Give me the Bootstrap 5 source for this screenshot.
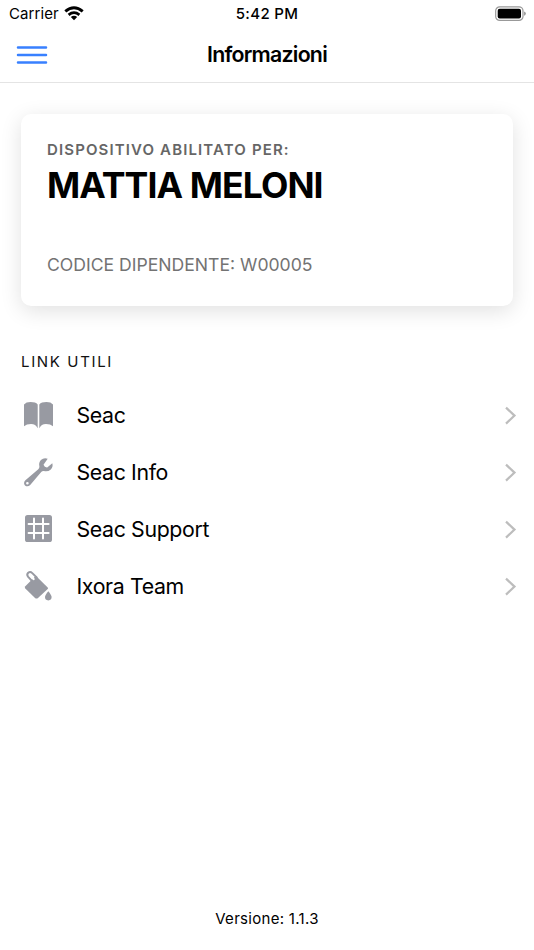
<!DOCTYPE html>
<html lang="it">
<head>
<meta charset="utf-8">
<meta name="viewport" content="width=device-width, initial-scale=1">
<title>Informazioni</title>
<link href="https://cdn.jsdelivr.net/npm/bootstrap@5.3.0/dist/css/bootstrap.min.css" rel="stylesheet">
<style>
body{font-family:Inter,"Liberation Sans",sans-serif;color:#000;background:#fff;height:950px;overflow:hidden;white-space:nowrap}
svg{display:block;flex:none}
.status-bar{height:27px;font-size:15px;line-height:27px;padding:0 8px 0 9px}
.carrier{letter-spacing:.1px}
.clock{font-weight:500;letter-spacing:.35px}
.title-bar{height:56px;border-bottom:1px solid #e4e4e4}
.page-title{font-size:21.3px;font-weight:600;letter-spacing:-.75px;line-height:55px}
.menu-btn{left:16px;top:12px;line-height:0}
.info-card{margin:31px 21px 0;height:192px;border-radius:10px;box-shadow:0 5px 21px rgba(0,0,0,.12);padding:26px}
.card-label{font-size:15px;font-weight:600;color:#666;letter-spacing:1.13px;line-height:20px}
.holder{font-size:35.6px;font-weight:700;letter-spacing:-.9px;line-height:44px;margin:4px 0 0}
.code{font-size:17.6px;font-weight:400;color:#737373;letter-spacing:0;line-height:24px;margin-top:45px}
.section-label{font-size:15px;font-weight:400;color:#111;letter-spacing:1.65px;line-height:20px;margin:46px 21px 0}
.link-row{height:56.8px;padding:0 12.5px 0 22px;font-size:21.3px;letter-spacing:-.36px;color:#000}
.link-row span{margin-left:22.5px}
.row-icon{margin-top:-3px}
.version{font-size:15px;line-height:20px;letter-spacing:.3px;padding-bottom:21px}
</style>
</head>
<body class="d-flex flex-column">
<header>
  <div class="status-bar position-relative d-flex align-items-center justify-content-between">
    <div class="d-flex align-items-center"><span class="carrier">Carrier</span>
      <svg class="ms-1" width="22" height="16" viewBox="0 0 22 16" fill="none" stroke="#000" stroke-width="3"><path d="M2.3 5.3Q11 -1.7 19.7 5.3"/><path d="M5.6 8.8Q11 4.5 16.4 8.8" stroke-width="2.8"/><path d="M7.8 11.1Q11 8.5 14.2 11.1L11 14.3Z" fill="#000" stroke="none"/></svg>
    </div>
    <div class="clock position-absolute start-50 translate-middle-x">5:42 PM</div>
    <svg width="31" height="16" viewBox="0 0 31 16"><rect x="0.7" y="0.8" width="27.3" height="13.6" rx="4" fill="none" stroke="#999" stroke-width="1.2"/><rect x="2.7" y="2.8" width="23.3" height="9.6" rx="2"/><path d="M29.2 5.4q1.5.5 1.5 2.2t-1.5 2.2z" fill="#888"/></svg>
  </div>
  <nav class="title-bar position-relative text-center">
    <button class="btn border-0 p-0 menu-btn position-absolute" aria-label="Menu"><svg width="32" height="32" viewBox="0 0 32 32" stroke="#3880ff" stroke-width="2.5" stroke-linecap="round"><path d="M2 8.5h28M2 16h28M2 23.5h28"/></svg></button>
    <h1 class="page-title m-0 d-inline-block">Informazioni</h1>
  </nav>
</header>
<main class="flex-grow-1">
  <section class="info-card bg-white">
    <div class="card-label">DISPOSITIVO ABILITATO PER:</div>
    <h2 class="holder">MATTIA MELONI</h2>
    <div class="code">CODICE DIPENDENTE: W00005</div>
  </section>
  <h3 class="section-label">LINK UTILI</h3>
  <div class="d-flex flex-column mt-3">
    <a class="link-row d-flex align-items-center text-decoration-none" href="#">
      <svg class="row-icon" width="32" height="32" viewBox="0 0 32 32" fill="#989aa2"><path d="M2 5.4Q4 3 8.5 3Q13.7 3 15.7 5.4V29.3Q13.8 25 9 25Q4.5 25 2 27.3Z"/><path d="M31 5.4Q29 3 24.5 3Q19.3 3 17.3 5.4V29.3Q19.2 25 24 25Q28.5 25 31 27.3Z"/></svg>
      <span>Seac</span><svg class="ms-auto" width="22" height="22" viewBox="0 0 22 22" fill="none" stroke="#bdbdbd" stroke-width="2.2"><path d="M6 2.6l8.5 8-8.5 8"/></svg></a>
    <a class="link-row d-flex align-items-center text-decoration-none" href="#">
      <svg class="row-icon" width="32" height="32" viewBox="0 0 32 32"><path fill="#989aa2" fill-rule="evenodd" d="M30.3 7.3L25.2 11.4Q22.6 11.6 21.5 8.8L25.7 2.8Q22.1 1.1 18.9 4.1Q16.4 6.7 17.4 10.5Q17.5 12.2 16.3 13.3L3.4 24.3Q.9 27 3 29.4Q5.5 31.5 8.2 29L19.2 16Q20.3 14.9 22 15.1Q25.9 16 28.8 13.5Q31.4 10.9 30.3 7.3ZM5.4 26A1.3 1.3 0 1 1 5.4 28.6A1.3 1.3 0 1 1 5.4 26Z"/></svg>
      <span>Seac Info</span><svg class="ms-auto" width="22" height="22" viewBox="0 0 22 22" fill="none" stroke="#bdbdbd" stroke-width="2.2"><path d="M6 2.6l8.5 8-8.5 8"/></svg></a>
    <a class="link-row d-flex align-items-center text-decoration-none" href="#">
      <svg class="row-icon" width="32" height="32" viewBox="0 0 32 32"><rect x="3" y="3" width="27" height="27" rx="2.6" fill="#989aa2"/><path d="M12 6.6v20M21 6.6v20M6.6 12h20M6.6 21h20" stroke="#fff" stroke-width="2" stroke-linecap="round"/></svg>
      <span>Seac Support</span><svg class="ms-auto" width="22" height="22" viewBox="0 0 22 22" fill="none" stroke="#bdbdbd" stroke-width="2.2"><path d="M6 2.6l8.5 8-8.5 8"/></svg></a>
    <a class="link-row d-flex align-items-center text-decoration-none" href="#">
      <svg class="row-icon" width="32" height="32" viewBox="0 0 32 32" fill="#989aa2"><path d="M13.8 6.8L25.7 18.5Q26.5 19.3 25.7 20.1L16 29Q14.5 30.2 13 29L3.3 19.5Q2.3 18.3 3.3 17.3Z"/><path d="M10.5 12.5L6 7.7Q4.4 5.6 6.2 3.8Q8.2 2.1 10.3 4.1L15.2 9" fill="none" stroke="#989aa2" stroke-width="2"/><path d="M8.6 6.8l3 3.3" stroke="#fff" stroke-width="2.2" stroke-linecap="round"/><path d="M26.3 22.3Q29.6 26.2 29.6 28.1A3.3 3.3 0 0 1 23 28.1Q23 26.2 26.3 22.3Z"/></svg>
      <span>Ixora Team</span><svg class="ms-auto" width="22" height="22" viewBox="0 0 22 22" fill="none" stroke="#bdbdbd" stroke-width="2.2"><path d="M6 2.6l8.5 8-8.5 8"/></svg></a>
  </div>
</main>
<footer class="version text-center">Versione: 1.1.3</footer>
<script src="https://cdn.jsdelivr.net/npm/bootstrap@5.3.0/dist/js/bootstrap.bundle.min.js"></script>
</body>
</html>
